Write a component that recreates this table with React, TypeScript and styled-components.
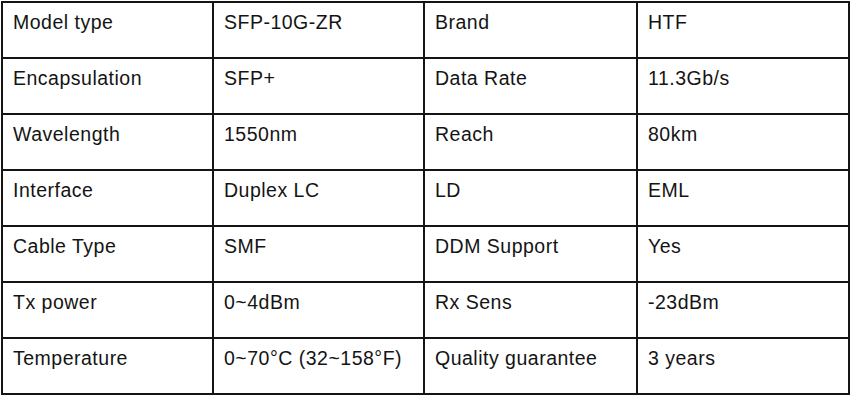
import React from 'react';
import styled, { createGlobalStyle } from 'styled-components';

const GlobalStyle = createGlobalStyle`
  html, body {
    margin: 0;
    padding: 0;
    background: #ffffff;
  }
`;

const Page = styled.div`
  width: 850px;
  height: 401px;
  padding: 1px 0 0 1px;
  box-sizing: border-box;
  background: #ffffff;
`;

const SpecTable = styled.table`
  width: 847px;
  table-layout: fixed;
  border-collapse: collapse;
  border: 2px solid #151515;
  font-family: "Liberation Sans", Arial, sans-serif;
  font-size: 19.5px;
  letter-spacing: 0.5px;
  color: #141414;
`;

const Row = styled.tr`
  height: 56px;
`;

// width is the content width: column width minus padding and border
const Cell = styled.td<{ $width: number }>`
  width: ${p => p.$width - 22}px;
  border: 2px solid #151515;
  padding: 8px 10px 0;
  vertical-align: top;
  white-space: nowrap;
  line-height: 22px;
`;

const colWidths = [211, 211, 213, 212];

const rows: [string, string, string, string][] = [
  ['Model type', 'SFP-10G-ZR', 'Brand', 'HTF'],
  ['Encapsulation', 'SFP+', 'Data Rate', '11.3Gb/s'],
  ['Wavelength', '1550nm', 'Reach', '80km'],
  ['Interface', 'Duplex LC', 'LD', 'EML'],
  ['Cable Type', 'SMF', 'DDM Support', 'Yes'],
  ['Tx power', '0~4dBm', 'Rx Sens', '-23dBm'],
  ['Temperature', '0~70°C (32~158°F)', 'Quality guarantee', '3 years'],
];

const App: React.FC = () => {
  return (
    <>
      <GlobalStyle />
      <Page>
        <SpecTable>
          <tbody>
            {rows.map(r => (
              <Row key={r[0]}>
                {r.map((c, i) => (
                  <Cell key={i} $width={colWidths[i]}>{c}</Cell>
                ))}
              </Row>
            ))}
          </tbody>
        </SpecTable>
      </Page>
    </>
  );
};

export default App;
